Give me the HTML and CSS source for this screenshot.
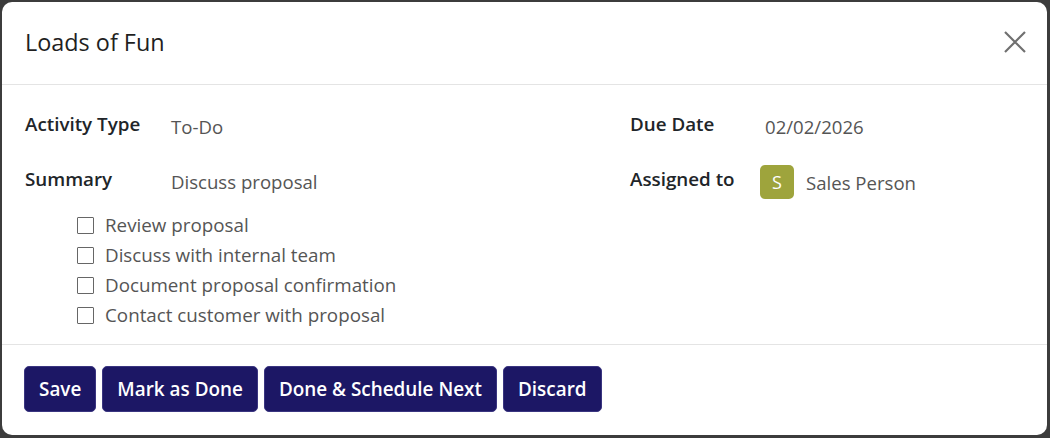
FILE: index.html
```html
<!DOCTYPE html>
<html>
<head>
<meta charset="utf-8">
<link rel="stylesheet" href="styles.css">
</head>
<body>
<div class="modal">
  <div class="header">
    <h1 class="title">Loads of Fun</h1>
    <button class="close" aria-label="Close">
      <svg width="22" height="22" viewBox="0 0 22 22"><path d="M1 1L21 21M21 1L1 21" stroke="#707070" stroke-width="2.2" fill="none"/></svg>
    </button>
  </div>
  <div class="body">
    <div class="fields">
      <div class="field">
        <div class="label">Activity Type</div>
        <div class="value">To-Do</div>
      </div>
      <div class="field right">
        <div class="label">Due Date</div>
        <div class="value date">02/02/2026</div>
      </div>
      <div class="field">
        <div class="label">Summary</div>
        <div class="value">Discuss proposal</div>
      </div>
      <div class="field right">
        <div class="label">Assigned to</div>
        <div class="value user"><span class="avatar">S</span><span>Sales Person</span></div>
      </div>
    </div>
    <ul class="checklist">
      <li><span class="box"></span>Review proposal</li>
      <li><span class="box"></span>Discuss with internal team</li>
      <li><span class="box"></span>Document proposal confirmation</li>
      <li><span class="box"></span>Contact customer with proposal</li>
    </ul>
  </div>
  <div class="footer">
    <button class="btn">Save</button>
    <button class="btn">Mark as Done</button>
    <button class="btn">Done &amp; Schedule Next</button>
    <button class="btn">Discard</button>
  </div>
</div>
</body>
</html>
```
FILE: styles.css
```css
html, body {
  margin: 0;
  padding: 0;
  height: 100%;
}
body {
  background: #3c3c3c;
  font-family: "Open Sans", "Noto Sans", sans-serif;
  padding: 2px 3px 3px 2px;
  box-sizing: border-box;
}
.modal {
  background: #fff;
  border-radius: 10px;
  height: 433px;
  display: flex;
  flex-direction: column;
  overflow: hidden;
}
.header {
  height: 82px;
  border-bottom: 1px solid #e4e4e4;
  display: flex;
  align-items: center;
  justify-content: space-between;
  padding: 0 21px 0 23px;
  flex: none;
}
.title {
  margin: 0;
  font-size: 23.4px;
  font-weight: 400;
  color: #1f1f1f;
  padding-bottom: 2px;
}
.close {
  border: 0;
  background: none;
  padding: 0;
  width: 22px;
  height: 22px;
  display: flex;
  margin-bottom: 2px;
}
.body {
  padding: 24px 23px 14px;
  flex: none;
  border-bottom: 1px solid #e4e4e4;
}
.fields {
  display: grid;
  grid-template-columns: 605px 1fr;
  row-gap: 21px;
}
.field {
  display: flex;
  align-items: center;
  height: 34px;
}
.label {
  width: 146px;
  font-size: 18.8px;
  font-weight: 600;
  color: #212529;
  margin-top: -5px;
  flex: none;
  white-space: nowrap;
}
.right .label {
  width: 130px;
}
.value {
  font-size: 18.6px;
  color: #555;
  white-space: nowrap;
}
.value.date {
  padding-left: 5px;
}
.user {
  display: flex;
  align-items: center;
  gap: 12px;
  margin-top: 2px;
}
.avatar {
  width: 34px;
  height: 34px;
  border-radius: 5px;
  background: #9ea43c;
  color: #fff;
  display: flex;
  align-items: center;
  justify-content: center;
  font-size: 18px;
}
.checklist {
  list-style: none;
  margin: 12px 0 0;
  padding: 0 0 0 52px;
}
.checklist li {
  height: 30px;
  display: flex;
  align-items: center;
  font-size: 18.8px;
  color: #555;
  white-space: nowrap;
}
.box {
  width: 15px;
  height: 15px;
  border: 1px solid #666;
  border-radius: 1px;
  margin-right: 11px;
  flex: none;
}
.footer {
  display: flex;
  gap: 6px;
  padding: 21px 22px 0;
}
.btn {
  height: 46px;
  background: #1c1765;
  color: #fff;
  border: 1px solid #3a3580;
  border-radius: 5px;
  font-family: "Open Sans", "Noto Sans", sans-serif;
  font-size: 18.9px;
  font-weight: 600;
  padding: 0 14px;
  white-space: nowrap;
}
```
